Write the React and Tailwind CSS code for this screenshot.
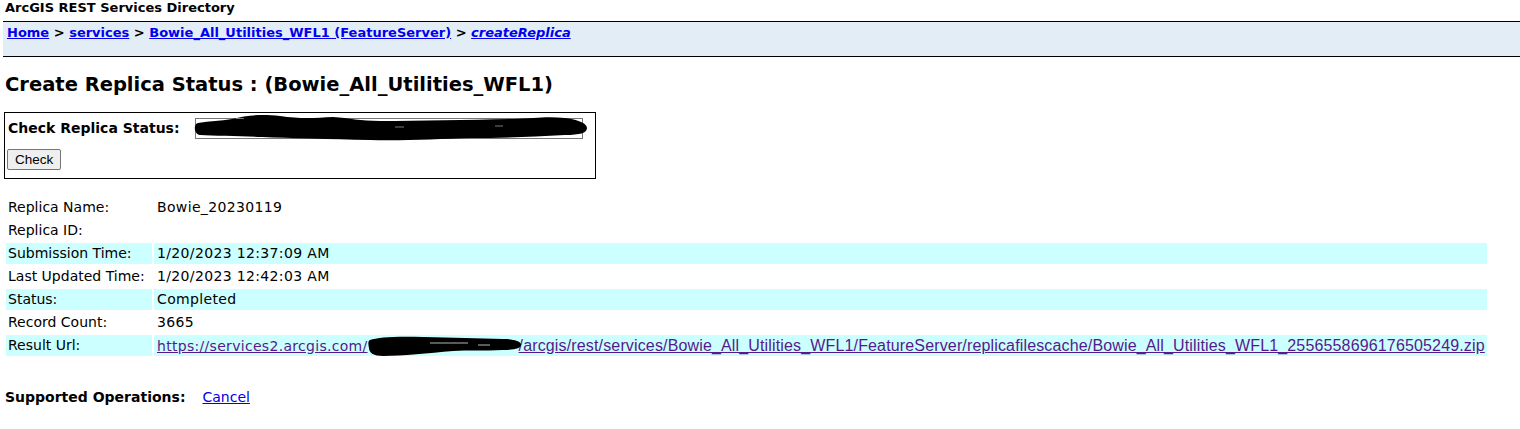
import React from "react";

const rows = [
  { label: "Replica Name:", value: "Bowie_20230119" },
  { label: "Replica ID:", value: "" },
  { label: "Submission Time:", value: "1/20/2023 12:37:09 AM", shade: true },
  { label: "Last Updated Time:", value: "1/20/2023 12:42:03 AM" },
  { label: "Status:", value: "Completed", shade: true },
  { label: "Record Count:", value: "3665" },
];

// marker-style redaction blobs
function InputScrawl() {
  return (
    <svg
      className="absolute left-[-5px] top-[-6px] pointer-events-none"
      width="400"
      height="32"
      viewBox="190 112 400 32"
    >
      <path
        d="M198 123 C210 121 220 121 232 119 C248 115 262 114 280 116 C300 119 315 118 333 117 C350 118 360 121 380 121 C420 121 470 120 513 119 C535 118 548 116 565 118 C580 120 587 124 587 128 C587 133 580 135 565 135 C530 137 500 138 470 138 C440 139 400 141 370 140 C330 139 290 138 262 137 C240 136 215 136 200 135 C194 134 193 124 198 123 Z"
        fill="#000"
      />
      <path d="M236 118.5 L244 118.5 M395 127 L404 127 M495 126 L503 126" stroke="#fff" strokeWidth="0.8" opacity="0.6" />
    </svg>
  );
}

function UrlScrawl() {
  return (
    <span className="relative inline-block w-[151px] h-[13px] align-baseline">
      <svg
        className="absolute left-[-3px] top-[-5px] pointer-events-none"
        width="160"
        height="24"
        viewBox="367 333 160 24"
      >
        <path
          d="M372 340 C380 337 400 336 425 337 C455 338 480 338 505 339 C515 339 522 341 523 344 C524 348 518 350 505 350 C485 351 470 350 455 351 C430 353 405 356 385 356 C376 356 371 353 371 348 C370 344 370 341 372 340 Z"
          fill="#000"
        />
        <path d="M432 343 L470 343 M480 345 L492 345" stroke="#fff" strokeWidth="1.2" opacity="0.7" />
      </svg>
    </span>
  );
}

export default function App() {
  return (
    <div className="min-h-[429px] bg-white text-black font-['DejaVu_Sans',Verdana,sans-serif] text-[13px] leading-[15px]">
      {/* Directory title */}
      <div className="px-[5px] pt-0 h-[21px] font-bold text-[13px]">
        ArcGIS REST Services Directory
      </div>

      {/* Breadcrumb band */}
      <div className="ml-[3px] h-[36px] border-t-[1.5px] border-b-[1.5px] border-black bg-[#e3edf6] px-[4px] pt-[3px] font-bold">
        <a href="#" className="text-[#0000ee] underline">Home</a>
        {" > "}
        <a href="#" className="text-[#0000ee] underline">services</a>
        {" > "}
        <a href="#" className="text-[#0000ee] underline">Bowie_All_Utilities_WFL1 (FeatureServer)</a>
        {" > "}
        <a href="#" className="text-[#0000ee] underline italic">createReplica</a>
      </div>

      <h2 className="px-[5px] mt-[17px] text-[19.5px] leading-[22px] font-bold">
        Create Replica Status : (Bowie_All_Utilities_WFL1)
      </h2>

      {/* Status lookup form */}
      <div className="ml-[4px] mt-[16px] w-[592px] h-[67px] border border-black px-[2px] pt-[5px] text-[14px]">
        <div className="flex items-center">
          <label className="font-bold w-[188px] pl-px">Check Replica Status:</label>
          <div className="relative">
            <input
              type="text"
              className="block w-[388px] h-[21px] border border-[#767676] bg-white outline-none"
            />
            <InputScrawl />
          </div>
        </div>
        <button className="mt-[10px] h-[21px] px-[7px] border border-[#767676] rounded-[2px] bg-[#efefef] text-[13.5px] font-['Liberation_Sans',Arial,sans-serif] leading-[16px]">
          Check
        </button>
      </div>

      {/* Replica details */}
      <table className="ml-[4px] mt-[16px] w-[1485px] border-separate border-spacing-[2px] text-[14px]">
        <tbody>
          {rows.map((r) => (
            <tr key={r.label} className={r.shade ? "bg-[#ccffff]" : ""}>
              <td className="h-[21px] w-[146px] pl-[2px] pr-0 align-middle whitespace-nowrap">{r.label}</td>
              <td className="h-[21px] pl-[3px] pr-0 align-middle whitespace-nowrap tracking-[0.35px]">{r.value}</td>
            </tr>
          ))}
          <tr className="bg-[#ccffff]">
            <td className="h-[21px] w-[146px] pl-[2px] pr-0 align-middle">Result Url:</td>
            <td className="h-[21px] pl-[3px] pr-0 align-middle whitespace-nowrap">
              <a href="#" className="text-[#551a8b] underline tracking-[0.3px]">
                https://services2.arcgis.com/
                <UrlScrawl />
                <span className="font-['Liberation_Sans',Arial,sans-serif] text-[16px] tracking-[0.15px]">
                  /arcgis/rest/services/Bowie_All_Utilities_WFL1/FeatureServer/replicafilescache/Bowie_All_Utilities_WFL1_2556558696176505249.zip
                </span>
              </a>
            </td>
          </tr>
        </tbody>
      </table>

      <div className="px-[5px] mt-[32px] flex items-baseline text-[14px]">
        <span className="font-bold">Supported Operations:</span>
        <a href="#" className="ml-[17px] text-[#0000ee] underline">Cancel</a>
      </div>
    </div>
  );
}
